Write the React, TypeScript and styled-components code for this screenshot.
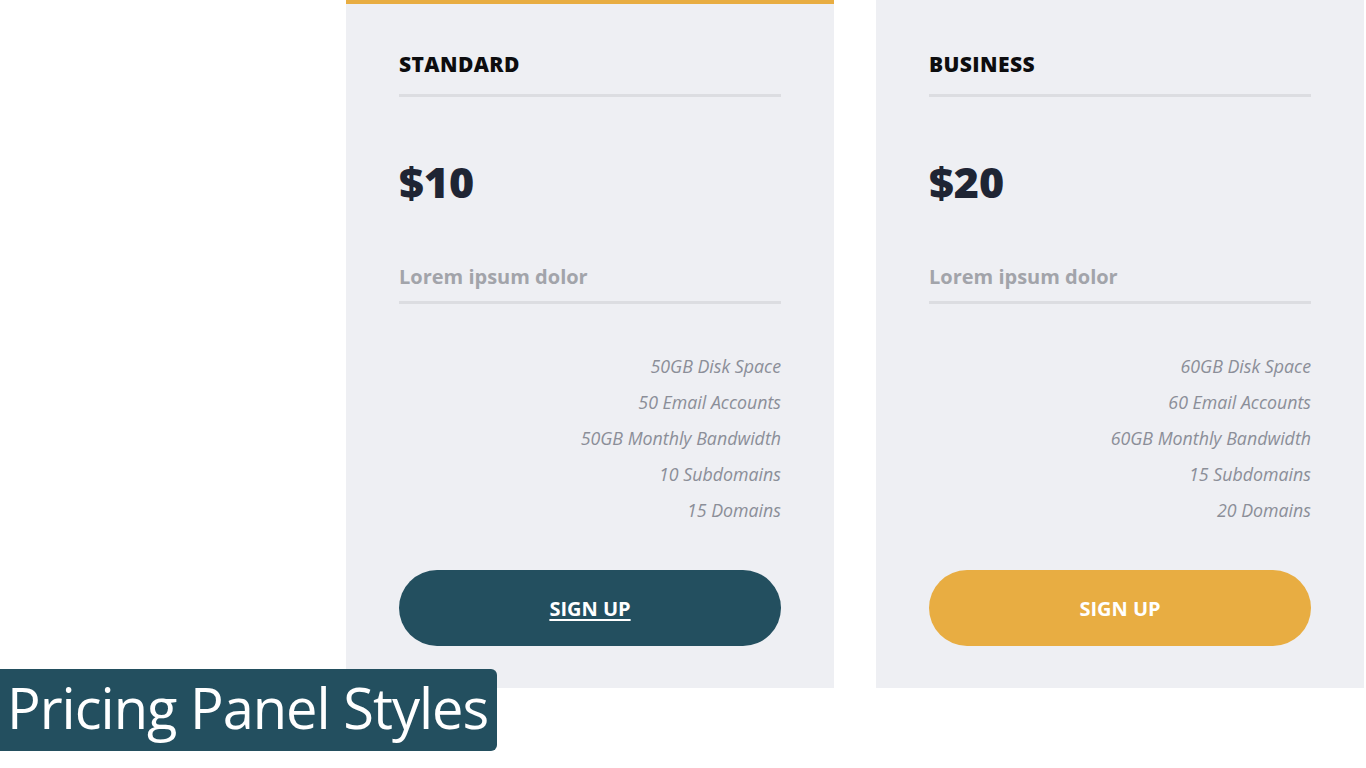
import React from "react";
import styled, { createGlobalStyle } from "styled-components";

const Global = createGlobalStyle`
  html, body { margin: 0; padding: 0; background: #ffffff; }
  body { font-family: "Open Sans", "Noto Sans", sans-serif; }
`;

const Page = styled.div`
  position: relative;
  width: 1366px;
  height: 768px;
  overflow: hidden;
  background: #ffffff;
`;

const Row = styled.div`
  display: flex;
  gap: 42px;
  padding-left: 346px;
`;

const Card = styled.section<{ $accent?: boolean }>`
  box-sizing: border-box;
  width: 488px;
  height: 688px;
  background: #eeeff3;
  border-top: 4px solid ${(p) => (p.$accent ? "#e8ad42" : "#eeeff3")};
  padding: 50px 53px 42px;
  display: flex;
  flex-direction: column;
`;

const Title = styled.h2`
  margin: 0;
  font-size: 21px;
  line-height: 21px;
  font-weight: 800;
  color: #0d0d0f;
  letter-spacing: 0.4px;
`;

const Rule = styled.div<{ $gap: number }>`
  height: 3px;
  background: #dcdde1;
  margin-top: ${(p) => p.$gap}px;
`;

const Price = styled.div`
  margin-top: 63px;
  font-size: 43px;
  line-height: 43px;
  font-weight: 800;
  color: #1f2534;
`;

const Sub = styled.div`
  margin-top: 64px;
  font-size: 20px;
  line-height: 20px;
  font-weight: 700;
  color: #a2a4aa;
`;

const Features = styled.ul`
  list-style: none;
  margin: 44px 0 0;
  padding: 0;
  text-align: right;
`;

const Feature = styled.li`
  font-size: 17.8px;
  line-height: 36px;
  font-style: italic;
  color: #8b8e98;
`;

const Button = styled.a<{ $variant: "dark" | "gold" }>`
  margin-top: 42px;
  height: 76px;
  border-radius: 38px;
  display: flex;
  align-items: center;
  justify-content: center;
  background: ${(p) => (p.$variant === "dark" ? "#234f5f" : "#e8ad42")};
  color: #ffffff;
  font-size: 20px;
  font-weight: 700;
  text-decoration: ${(p) => (p.$variant === "dark" ? "underline" : "none")};
  text-underline-offset: 3px;
  cursor: pointer;
`;

const Label = styled.div`
  position: absolute;
  left: 0;
  top: 669px;
  width: 497px;
  height: 82px;
  box-sizing: border-box;
  background: #234f5f;
  border-radius: 0 6px 6px 0;
  display: flex;
  align-items: center;
  padding-left: 7px;
`;

const LabelText = styled.span`
  font-family: "Open Sans", "Noto Sans", sans-serif;
  font-stretch: 88%;
  font-weight: 500;
  font-size: 56px;
  line-height: 1;
  color: #ffffff;
  white-space: nowrap;
  letter-spacing: -1px;
  margin-top: -6px;
`;

type Plan = {
  name: string;
  price: string;
  features: string[];
  accent: boolean;
  variant: "dark" | "gold";
};

const plans: Plan[] = [
  {
    name: "STANDARD",
    price: "$10",
    features: ["50GB Disk Space", "50 Email Accounts", "50GB Monthly Bandwidth", "10 Subdomains", "15 Domains"],
    accent: true,
    variant: "dark",
  },
  {
    name: "BUSINESS",
    price: "$20",
    features: ["60GB Disk Space", "60 Email Accounts", "60GB Monthly Bandwidth", "15 Subdomains", "20 Domains"],
    accent: false,
    variant: "gold",
  },
];

export default function App() {
  return (
    <Page>
      <Global />
      <Row>
        {plans.map((p) => (
          <Card key={p.name} $accent={p.accent}>
            <Title>{p.name}</Title>
            <Rule $gap={19} />
            <Price>{p.price}</Price>
            <Sub>Lorem ipsum dolor</Sub>
            <Rule $gap={14} />
            <Features>
              {p.features.map((f) => (
                <Feature key={f}>{f}</Feature>
              ))}
            </Features>
            <Button $variant={p.variant}>SIGN UP</Button>
          </Card>
        ))}
      </Row>
      <Label>
        <LabelText>Pricing Panel Styles</LabelText>
      </Label>
    </Page>
  );
}
